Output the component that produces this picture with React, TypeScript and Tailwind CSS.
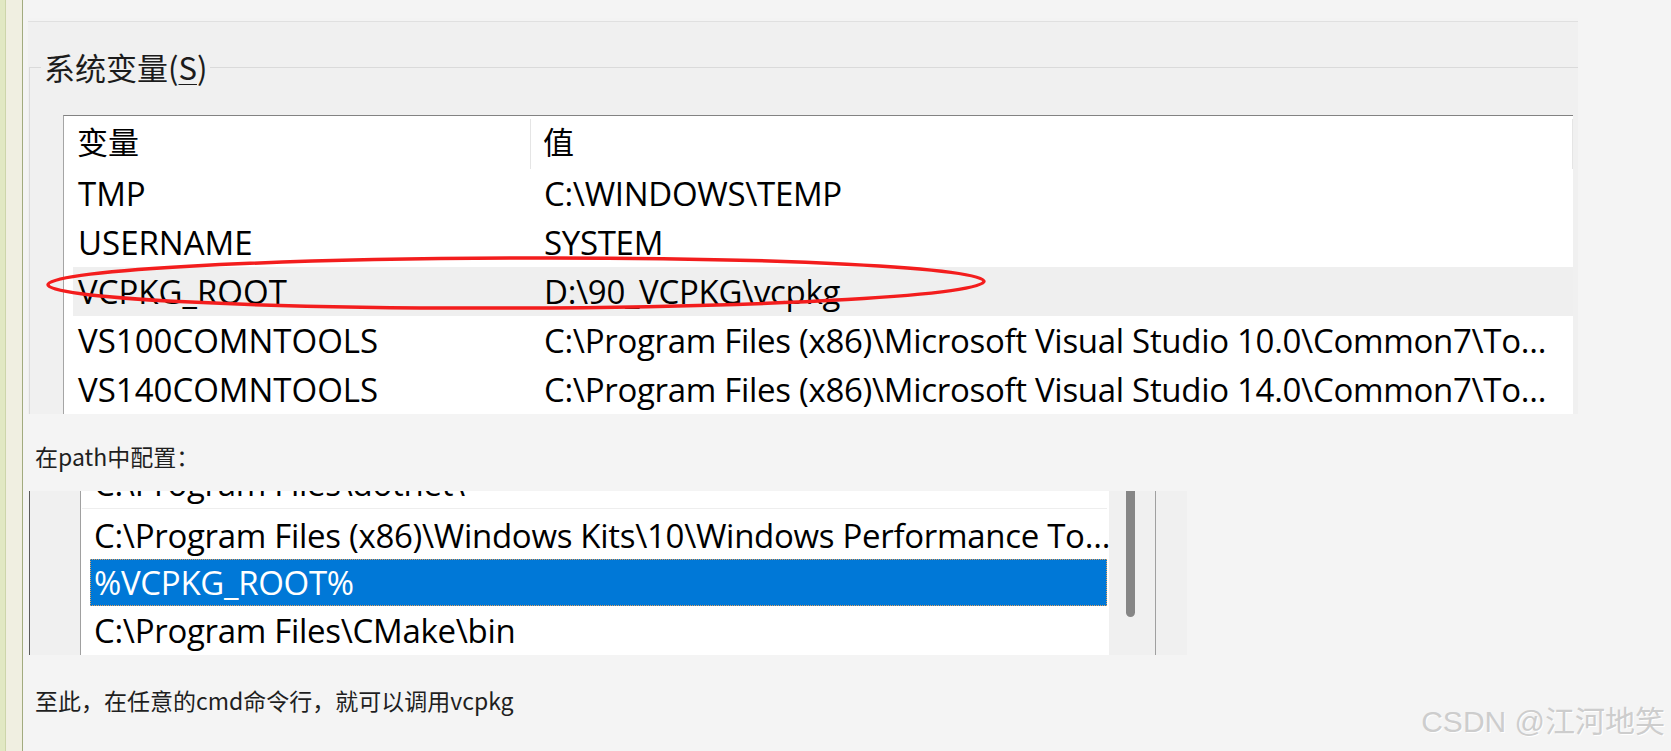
const SHOT_FONT = "font-['Open_Sans','Noto_Sans_CJK_SC',sans-serif]"

type EnvVar = { name: string; value: string; hover?: boolean }

const SYSTEM_VARS: EnvVar[] = [
  { name: 'TMP', value: 'C:\\WINDOWS\\TEMP' },
  { name: 'USERNAME', value: 'SYSTEM' },
  { name: 'VCPKG_ROOT', value: 'D:\\90_VCPKG\\vcpkg', hover: true },
  { name: 'VS100COMNTOOLS', value: 'C:\\Program Files (x86)\\Microsoft Visual Studio 10.0\\Common7\\To…' },
  { name: 'VS140COMNTOOLS', value: 'C:\\Program Files (x86)\\Microsoft Visual Studio 14.0\\Common7\\To…' }
]

function SideStrip() {
  return (
    <div className="flex h-full shrink-0">
      <div className="w-[5px] bg-[#e1e8c3]" />
      <div className="w-px bg-[#cdd5aa]" />
      <div className="w-[16px] bg-[#f0efe1]" />
      <div className="w-px bg-[#a2ab7f]" />
    </div>
  )
}

function SystemVarsShot() {
  return (
    <div className={`ml-[5px] mt-[18px] flex h-[396px] w-[1550px] flex-col overflow-hidden bg-[#f0f0f0] ${SHOT_FONT}`}>
      <div className="h-[7px] bg-[#f3f3f3]" />
      <div className="h-px bg-[#e0e0e0]" />

      {/* group box */}
      <div className="ml-px mt-[28px] flex h-[36px]">
        <div className="h-[18px] w-[12px] self-end border-l border-t border-[#dadada]" />
        <span className="px-[3px] text-[31px] leading-[36px] text-[#1c1c1c] font-['Noto_Sans_CJK_SC',sans-serif]">
          系统变量(<span className="underline decoration-1 underline-offset-4">S</span>)
        </span>
        <div className="h-[18px] flex-1 self-end border-t border-[#dadada]" />
      </div>

      <div className="ml-px flex flex-1 border-l border-[#dadada]">
        <div className="ml-[33px] mr-[5px] mt-[30px] flex flex-1 flex-col border-l border-t border-l-[#a5a5a5] border-t-[#828282] bg-white">
          <div className="flex h-[53px] shrink-0 text-[31px] text-black font-['Noto_Sans_CJK_SC',sans-serif]">
            <div className="flex w-[466px] items-center pb-[2px] pl-[13px]">变量</div>
            <div className="mt-[3px] w-px bg-[#e5e5e5]" />
            <div className="flex flex-1 items-center pb-[2px] pl-[12px]">值</div>
            <div className="mt-[3px] w-px bg-[#e5e5e5]" />
          </div>
          {SYSTEM_VARS.map(v => (
            <div
              key={v.name}
              className={`ml-[9px] flex h-[49px] shrink-0 items-center whitespace-nowrap text-[33px] text-black ${v.hover ? 'bg-[#efefef]' : ''}`}
            >
              <div className="w-[457px] pl-[5px]">{v.name}</div>
              <div className="flex-1 overflow-hidden pl-[14px] tracking-[-0.3px]">{v.value}</div>
            </div>
          ))}
        </div>
      </div>
    </div>
  )
}

function PathShot() {
  return (
    <div className={`ml-[6px] mt-[19px] flex h-[164px] w-[1158px] bg-[#f0f0f0] ${SHOT_FONT}`}>
      <div className="w-px bg-[#5c5c5c]" />
      <div className="w-[50px]" />
      <div className="w-px bg-[#a0a0a0]" />
      <div className="w-[1028px] overflow-hidden bg-white">
        <div className="-mt-[31px] flex flex-col whitespace-nowrap text-[33px] tracking-[-0.3px] text-black">
          <div className="flex h-[48px] items-center pl-[13px]">C:\Program Files\dotnet\</div>
          <div className="ml-px mr-[2px] h-px bg-[#eeeeee]" />
          <div className="flex h-[50px] items-center pl-[13px] pt-[4px]">
            C:\Program Files (x86)\Windows Kits\10\Windows Performance To…
          </div>
          <div className="ml-[9px] mr-[2px] flex h-[47px] items-center border border-dotted border-[#e0a060] bg-[#0078d7] pl-[3px] text-white">
            %VCPKG_ROOT%
          </div>
          <div className="flex h-[49px] items-center pl-[13px]">C:\Program Files\CMake\bin</div>
        </div>
      </div>
      <div className="w-[46px]">
        <div className="ml-[17px] h-[126px] w-[9px] rounded-b-full bg-[#868686]" />
      </div>
      <div className="w-px bg-[#a0a0a0]" />
      <div className="flex-1" />
    </div>
  )
}

export default function App() {
  const article = "font-['Noto_Sans_CJK_SC','Noto_Sans',sans-serif] text-[23px] text-[#1f1f1f]"
  return (
    <div className="relative flex h-[751px] w-full overflow-hidden bg-[#f4f4f4]">
      <SideStrip />
      <div className="flex flex-1 flex-col">
        <SystemVarsShot />
        <p className={`ml-[12px] mt-[26px] h-[32px] leading-[32px] ${article}`}>在path中配置：</p>
        <PathShot />
        <p className={`ml-[12px] mt-[29px] h-[32px] leading-[32px] ${article}`}>
          至此，在任意的cmd命令行，就可以调用vcpkg
        </p>
      </div>

      {/* red marker around VCPKG_ROOT */}
      <svg className="pointer-events-none absolute left-0 top-0" width="1671" height="751" viewBox="0 0 1671 751">
        <ellipse cx="516" cy="283" rx="468" ry="25" fill="none" stroke="#f31d1d" strokeWidth="3.5" transform="rotate(-0.2 516 283)" />
      </svg>

      <div className="absolute right-[6px] top-[704px] text-[30px] leading-[36px] text-[#cdcdcd] [text-shadow:1px_1px_0_#ffffff] font-['Liberation_Sans','Noto_Sans_CJK_SC',sans-serif]">
        CSDN @江河地笑
      </div>
    </div>
  )
}
